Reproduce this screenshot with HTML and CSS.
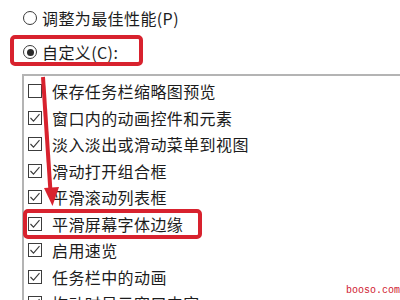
FILE: index.html
```html
<!DOCTYPE html>
<html lang="zh">
<head>
<meta charset="utf-8">
<link rel="stylesheet" href="styles.css">
</head>
<body>
<div class="page">
  <div class="radio-row"><span class="radio"></span><span class="label">调整为最佳性能(P)</span></div>
  <div class="radio-row marked"><span class="radio on"></span><span class="label">自定义(C):</span><span class="hl hl-top"></span></div>
  <div class="list">
    <div class="item"><span class="cb"></span><span class="label">保存任务栏缩略图预览</span></div>
    <div class="item"><span class="cb on"><svg viewBox="0 0 14 14"><path d="M2.5 7 L5.5 10.2 L11.5 3.2"/></svg></span><span class="label">窗口内的动画控件和元素</span></div>
    <div class="item"><span class="cb on"><svg viewBox="0 0 14 14"><path d="M2.5 7 L5.5 10.2 L11.5 3.2"/></svg></span><span class="label">淡入淡出或滑动菜单到视图</span></div>
    <div class="item"><span class="cb on"><svg viewBox="0 0 14 14"><path d="M2.5 7 L5.5 10.2 L11.5 3.2"/></svg></span><span class="label">滑动打开组合框</span></div>
    <div class="item"><span class="cb on"><svg viewBox="0 0 14 14"><path d="M2.5 7 L5.5 10.2 L11.5 3.2"/></svg></span><span class="label">平滑滚动列表框</span></div>
    <div class="item marked"><span class="cb on"><svg viewBox="0 0 14 14"><path d="M2.5 7 L5.5 10.2 L11.5 3.2"/></svg></span><span class="label">平滑屏幕字体边缘</span><span class="hl hl-item"></span></div>
    <div class="item"><span class="cb on"><svg viewBox="0 0 14 14"><path d="M2.5 7 L5.5 10.2 L11.5 3.2"/></svg></span><span class="label">启用速览</span></div>
    <div class="item"><span class="cb on"><svg viewBox="0 0 14 14"><path d="M2.5 7 L5.5 10.2 L11.5 3.2"/></svg></span><span class="label">任务栏中的动画</span></div>
    <div class="item"><span class="cb on"><svg viewBox="0 0 14 14"><path d="M2.5 7 L5.5 10.2 L11.5 3.2"/></svg></span><span class="label">拖动时显示窗口内容</span></div>
  </div>
  <svg class="arrow" viewBox="0 0 400 300" width="400" height="300">
    <line x1="43" y1="77" x2="50.5" y2="192" />
    <polygon points="44,188 59,187 52.5,206" />
  </svg>
  <div class="wm">booso.com</div>
</div>
</body>
</html>
```
FILE: styles.css
```css
html, body {
  margin: 0;
  padding: 0;
  background: #ffffff;
}
body {
  width: 400px;
  height: 300px;
  overflow: hidden;
  font-family: "Noto Sans CJK SC", "Noto Sans", sans-serif;
  font-size: 16px;
  color: #1c1c1c;
}
.page {
  position: relative;
  width: 400px;
  height: 300px;
  padding-top: 1px;
  box-sizing: border-box;
}
.label {
  letter-spacing: 0.4px;
  line-height: 20px;
  white-space: nowrap;
}
.radio-row {
  display: flex;
  align-items: center;
  gap: 5px;
  height: 34px;
  padding-left: 23px;
  position: relative;
}
.radio {
  width: 14px;
  height: 14px;
  border: 1px solid #3a3a3a;
  border-radius: 50%;
  box-sizing: border-box;
  display: flex;
  align-items: center;
  justify-content: center;
  flex: none;
}
.radio.on::after {
  content: "";
  width: 7px;
  height: 7px;
  border-radius: 50%;
  background: #2a2a2a;
}
.list {
  margin-top: 5px;
  margin-left: 22px;
  border-top: 2px solid #b4b4b4;
  border-left: 2px solid #b4b4b4;
  padding-top: 2px;
  padding-left: 4px;
}
.item {
  display: flex;
  align-items: center;
  gap: 10px;
  height: 26.5px;
  position: relative;
}
.cb {
  width: 14px;
  height: 14px;
  border: 1px solid #3c3c3c;
  box-sizing: border-box;
  flex: none;
  position: relative;
}
.cb svg {
  position: absolute;
  left: -1px;
  top: -1px;
  width: 14px;
  height: 14px;
}
.cb path {
  fill: none;
  stroke: #3a3a3a;
  stroke-width: 1.1;
}
.hl {
  position: absolute;
  border: 4px solid #d8222e;
  border-radius: 5px;
  box-sizing: border-box;
}
.hl-top {
  left: 10px;
  top: 0;
  width: 133px;
  height: 31px;
}
.hl-item {
  left: -5px;
  top: -1.5px;
  width: 179px;
  height: 30px;
}
.arrow {
  position: absolute;
  left: 0;
  top: 0;
}
.arrow line {
  stroke: #d8222e;
  stroke-width: 4;
}
.arrow polygon {
  fill: #d8222e;
}
.wm {
  position: absolute;
  right: 0;
  bottom: 4px;
  font-family: "Liberation Mono", "DejaVu Sans Mono", monospace;
  font-size: 10px;
  color: #d02030;
  line-height: 10px;
}
```
